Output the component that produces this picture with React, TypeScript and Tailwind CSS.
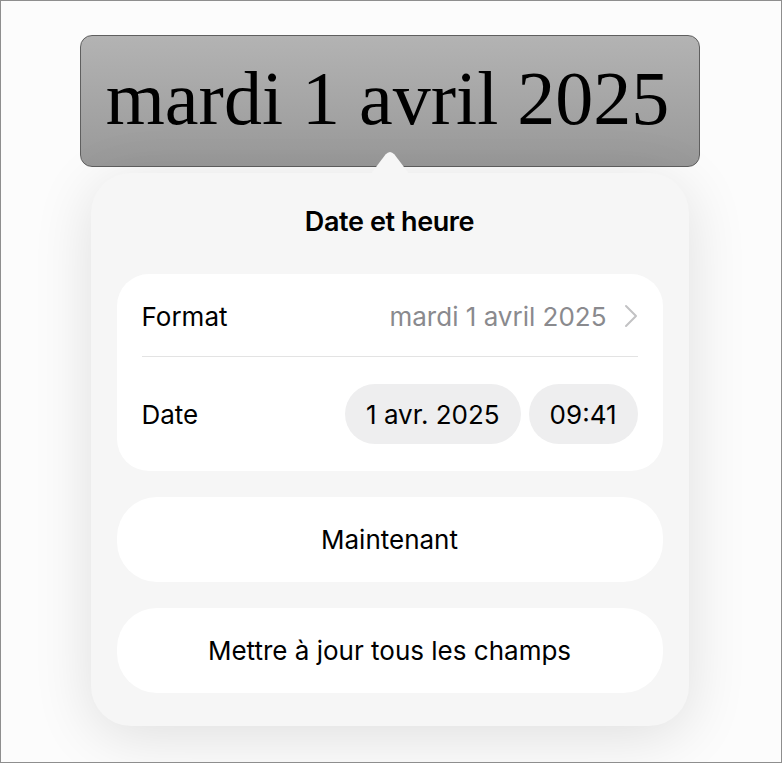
import React from "react";

const sans = { fontFamily: "Inter, 'Noto Sans', sans-serif" };

function Chevron() {
  return (
    <svg width="14" height="24" viewBox="0 0 14 24" fill="none">
      <path d="M2 2l10 10-10 10" stroke="#c2c2c4" strokeWidth="2" strokeLinecap="round" strokeLinejoin="round" />
    </svg>
  );
}

export default function App() {
  return (
    <div className="w-[782px] h-[763px] border border-[#8e8e8e] bg-[#fcfcfc] overflow-hidden flex flex-col items-center pr-[3px]" style={sans}>
      {/* selected date field */}
      <div className="mt-[34px] w-[620px] h-[132px] rounded-[12px] border border-[#5f5f5f] bg-gradient-to-b from-[#b3b3b3] to-[#999999] flex items-center justify-center">
        <span className="text-[76px] leading-none text-black pb-[6px] pr-[4px]" style={{ fontFamily: "'Liberation Serif', 'DejaVu Serif', serif" }}>
          mardi 1 avril 2025
        </span>
      </div>

      {/* popover */}
      <div className="relative mt-[6px] w-[598px] h-[553px] rounded-[40px] bg-[#f6f6f6] shadow-[0_10px_60px_rgba(0,0,0,0.12)] px-[26px] flex flex-col">
        <svg className="absolute left-1/2 -translate-x-1/2 -top-[22px]" width="40" height="24" viewBox="0 0 40 24">
          <path d="M0 24 L15.5 3.5 Q20 -1.5 24.5 3.5 L40 24 Z" fill="#f6f6f6" />
        </svg>

        <div className="h-[101px] flex items-center justify-center pb-[2px]">
          <span className="text-[27px] font-semibold text-black tracking-[-0.4px]">Date et heure</span>
        </div>

        <div className="bg-white rounded-[32px] px-[25px]">
          <div className="h-[83px] flex items-center justify-between border-b border-[#e3e3e3] pt-[2px]">
            <span className="text-[26px] text-black">Format</span>
            <div className="flex items-center gap-[17px]">
              <span className="text-[26px] text-[#8a8a8e]">mardi 1 avril 2025</span>
              <Chevron />
            </div>
          </div>
          <div className="h-[114px] flex items-center justify-between">
            <span className="text-[26px] text-black">Date</span>
            <div className="flex items-center gap-[8px]">
              <div className="h-[60px] px-[21px] rounded-full bg-[#eeeeef] flex items-center text-[26px] text-black">1 avr. 2025</div>
              <div className="h-[60px] px-[21px] rounded-full bg-[#eeeeef] flex items-center text-[26px] text-black">09:41</div>
            </div>
          </div>
        </div>

        <button className="mt-[26px] h-[85px] rounded-[40px] bg-white flex items-center justify-center text-[26px] text-black">
          Maintenant
        </button>
        <button className="mt-[26px] h-[85px] rounded-[40px] bg-white flex items-center justify-center text-[26px] text-black">
          Mettre à jour tous les champs
        </button>
      </div>
    </div>
  );
}
